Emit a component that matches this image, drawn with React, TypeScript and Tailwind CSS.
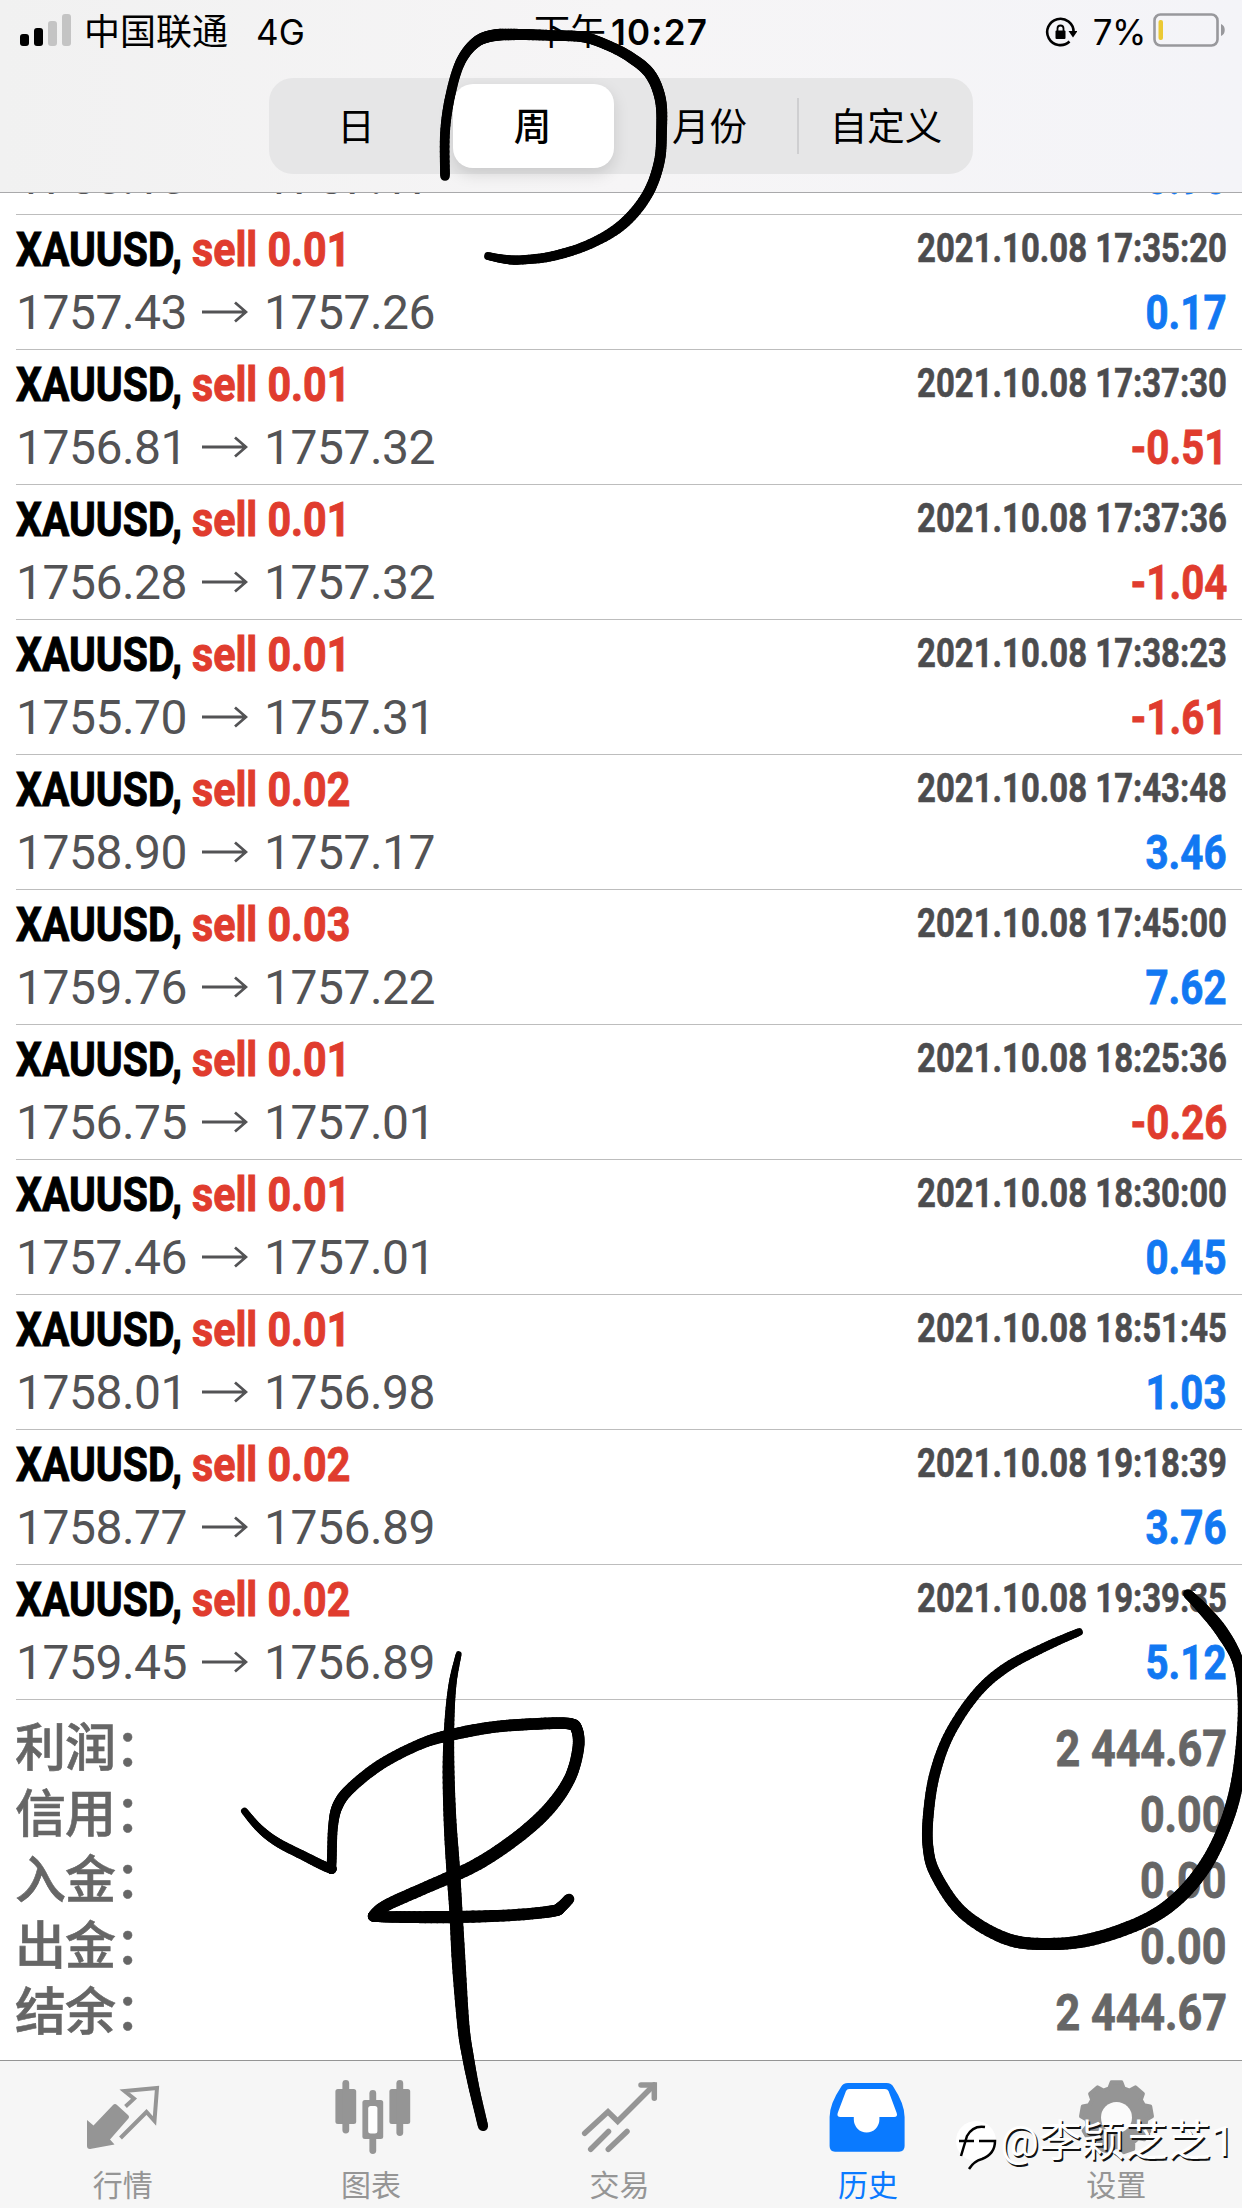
import type { ReactNode } from 'react';

type Deal = {
  volume: string;
  open: string;
  close: string;
  time: string;
  profit: string;
};

const deals: Deal[] = [
  { volume: '0.01', open: '1757.43', close: '1757.26', time: '2021.10.08 17:35:20', profit: '0.17' },
  { volume: '0.01', open: '1756.81', close: '1757.32', time: '2021.10.08 17:37:30', profit: '-0.51' },
  { volume: '0.01', open: '1756.28', close: '1757.32', time: '2021.10.08 17:37:36', profit: '-1.04' },
  { volume: '0.01', open: '1755.70', close: '1757.31', time: '2021.10.08 17:38:23', profit: '-1.61' },
  { volume: '0.02', open: '1758.90', close: '1757.17', time: '2021.10.08 17:43:48', profit: '3.46' },
  { volume: '0.03', open: '1759.76', close: '1757.22', time: '2021.10.08 17:45:00', profit: '7.62' },
  { volume: '0.01', open: '1756.75', close: '1757.01', time: '2021.10.08 18:25:36', profit: '-0.26' },
  { volume: '0.01', open: '1757.46', close: '1757.01', time: '2021.10.08 18:30:00', profit: '0.45' },
  { volume: '0.01', open: '1758.01', close: '1756.98', time: '2021.10.08 18:51:45', profit: '1.03' },
  { volume: '0.02', open: '1758.77', close: '1756.89', time: '2021.10.08 19:18:39', profit: '3.76' },
  { volume: '0.02', open: '1759.45', close: '1756.89', time: '2021.10.08 19:39:35', profit: '5.12' },
];

const totals = [
  { label: '利润：', value: '2 444.67' },
  { label: '信用：', value: '0.00' },
  { label: '入金：', value: '0.00' },
  { label: '出金：', value: '0.00' },
  { label: '结余：', value: '2 444.67' },
];

function StatusBar() {
  return (
    <div className="flex h-[64px] items-center text-[36px] leading-[64px] text-black">
      <div className="flex w-[534px] items-center pl-5">
        <svg width="52" height="34" viewBox="0 0 52 34" className="mt-[-3px]">
          <rect x="0" y="20" width="9" height="12" rx="3" />
          <rect x="14" y="14" width="9" height="18" rx="3" />
          <rect x="28" y="7" width="9" height="25" rx="3" fill="#c4c4c4" />
          <rect x="42" y="0" width="9" height="32" rx="3" fill="#c4c4c4" />
        </svg>
        <span className="ml-[12px]">中国联通</span>
        <span className="ml-[28px] text-[35px]">4G</span>
      </div>
      <div className="flex items-center">
        <span>下午</span>
        <span className="ml-[5px] text-[35px] font-semibold tracking-[1.2px]">10:27</span>
      </div>
      <div className="ml-auto flex items-center pr-[15px]">
        <svg width="32" height="32" viewBox="0 0 32 32" fill="none" className="mr-[16px]">
          <path d="M24.5 25.5A13.2 13.2 0 1 1 28.6 16" stroke="#000" strokeWidth="2.6" />
          <path d="M23.5 15h9l-4.5 6.5z" fill="#000" />
          <rect x="10.5" y="14.5" width="10" height="8.5" rx="1" fill="#000" />
          <path d="M12.5 15v-2.5a3 3 0 0 1 6 0V15" stroke="#000" strokeWidth="1.8" />
        </svg>
        <span className="text-[35px] tracking-[-0.5px]">7%</span>
        <svg width="74" height="34" viewBox="0 0 74 34" className="ml-[7px] mt-[-4px]">
          <rect x="1.5" y="1.5" width="63" height="31" rx="6" fill="none" stroke="#98989c" strokeWidth="2.6" />
          <rect x="5.5" y="7" width="4.5" height="20" rx="2" fill="#ebc934" />
          <path d="M68 11c5 1.5 5 10.5 0 12z" fill="#98989c" />
        </svg>
      </div>
    </div>
  );
}

function PeriodPicker() {
  return (
    <div className="mx-auto mt-[14px] flex h-[96px] w-[704px] items-center rounded-[24px] bg-[#e6e6e7] text-[37.5px] text-black">
      <div className="w-[176px] pr-[2px] pt-[2px] text-center">日</div>
      <div className="mx-[8px] flex h-[84px] w-[161px] items-center justify-center rounded-[20px] bg-white pr-[2px] pt-[2px] font-medium shadow-[0_6px_16px_rgba(0,0,0,0.13)]">
        周
      </div>
      <div className="flex h-[56px] w-[177px] items-center justify-center border-r-2 border-[#cfcfd1] pt-[2px]">
        月份
      </div>
      <div className="flex-1 pt-[2px] text-center">自定义</div>
    </div>
  );
}

function PriceLine({ open, close, profit }: Pick<Deal, 'open' | 'close' | 'profit'>) {
  const loss = profit.startsWith('-');
  return (
    <div className="flex h-[59px] whitespace-nowrap text-[48px] leading-[59px]">
      <div className="flex text-[#535355]">
        <span className="w-[186px] tracking-[-0.5px]">{open}</span>
        <svg
          width="46"
          height="24"
          viewBox="0 0 46 24"
          className="mt-[17px]"
          fill="none"
          stroke="#535355"
          strokeWidth="2.8"
        >
          <path d="M0 12H44M33 2.5L44 12L33 21.5" />
        </svg>
        <span className="ml-[16px] tracking-[-0.5px]">{close}</span>
      </div>
      <span
        className={`ml-auto inline-block origin-right scale-x-[0.84] font-bold [-webkit-text-stroke:0.8px] ${loss ? 'text-[#e03c2e]' : 'text-[#1278f2]'}`}
      >
        {profit}
      </span>
    </div>
  );
}

function DealRow({ deal }: { deal: Deal }) {
  return (
    <div className="ml-4 h-[135px] border-b border-[#bdbdbd] pr-[15px]">
      <div className="flex h-[68px] whitespace-nowrap text-[48px] font-bold leading-[70px]">
        <div className="w-[176px]">
          <span className="inline-block origin-left scale-x-[0.85] text-black [-webkit-text-stroke:1px]">
            XAUUSD,
          </span>
        </div>
        <span className="inline-block origin-left scale-x-[0.858] text-[#e03c2e] [-webkit-text-stroke:1px]">
          sell {deal.volume}
        </span>
        <span className="ml-auto inline-block origin-right scale-x-[0.822] text-[40px] leading-[68px] text-[#4c4c4e] [-webkit-text-stroke:0.6px]">
          {deal.time}
        </span>
      </div>
      <PriceLine open={deal.open} close={deal.close} profit={deal.profit} />
    </div>
  );
}

function Totals() {
  return (
    <div className="pl-[15px] pr-[15px] pt-[16px]">
      {totals.map((t) => (
        <div key={t.label} className="flex h-[66px] justify-between whitespace-nowrap leading-[66px] text-[#666]">
          <span className="text-[51px] font-medium tracking-[-1px] [-webkit-text-stroke:0.6px]">{t.label}</span>
          <span className="inline-block origin-right scale-x-[0.862] text-[50px] font-bold [-webkit-text-stroke:0.8px]">
            {t.value}
          </span>
        </div>
      ))}
    </div>
  );
}

function QuotesIcon() {
  return (
    <>
      <path d="M3 45l6.5 5.5L29 30q2-2 4 0l11 10q2 2 0 4L26 64.5l4.5 5L6 74q-3 0-3-3z" fill="currentColor" />
      <path
        d="M41.5 31.5L50 23.7L40.5 16L73 13L70.5 46L62.5 37L36.5 63"
        fill="none"
        stroke="currentColor"
        strokeWidth="4"
      />
    </>
  );
}

function ChartsIcon() {
  return (
    <g fill="currentColor">
      <rect x="2.4" y="14" width="20.8" height="35" rx="2.5" />
      <rect x="9.4" y="5" width="6.8" height="53.5" rx="3.4" />
      <rect x="56.4" y="14" width="20.8" height="35" rx="2.5" />
      <rect x="63.4" y="5" width="6.8" height="56" rx="3.4" />
      <rect x="29.4" y="25" width="20.8" height="39" rx="2.5" />
      <rect x="36.4" y="15" width="6.8" height="64" rx="3.4" />
      <rect x="35.2" y="31" width="9.2" height="27.5" rx="2.5" fill="#fff" />
    </g>
  );
}

function TradeIcon() {
  return (
    <g fill="none" stroke="currentColor" strokeWidth="5.5" strokeLinecap="round">
      <path d="M3.7 58.3L27 36.7L36.7 46.3L73 10" />
      <path d="M60 10H73.3V23.3" />
      <path d="M9.7 74.3L27.5 56.5M27.3 74.3L46 56.5" />
    </g>
  );
}

function HistoryIcon() {
  return (
    <>
      <path
        d="M12 12Q14 8 19 8H57.5Q62.5 8 64.5 12Q75.6 29 75.6 42V71Q75.6 76.7 70 76.7H6Q.6 76.7 .6 71V42Q.6 29 12 12Z"
        fill="currentColor"
      />
      <path
        d="M17 16Q18 14 20 14H56Q58.5 14 59.5 16L67.7 38Q69 42 65 42H50.4V44.6A12.8 12.8 0 0 1 24.8 44.6V42H11.5Q7.5 42 8.7 38Z"
        fill="#fff"
      />
    </>
  );
}

const gearPoints = Array.from({ length: 9 })
  .flatMap((_, i) =>
    [
      [-14, 30],
      [-8, 35.5],
      [8, 35.5],
      [14, 30],
    ].map(([offset, r]) => {
      const a = ((i * 40 + offset - 90) * Math.PI) / 180;
      return `${38.5 + r * Math.cos(a)},${42.5 + r * Math.sin(a)}`;
    }),
  )
  .join(' ');

function SettingsIcon() {
  return (
    <>
      <polygon points={gearPoints} fill="currentColor" stroke="currentColor" strokeWidth="4" strokeLinejoin="round" />
      <circle cx="38.5" cy="42.5" r="15.5" fill="#fbfbfb" />
    </>
  );
}

function Tab({ label, active, children }: { label: string; active?: boolean; children: ReactNode }) {
  return (
    <div className={`flex flex-1 flex-col items-center pt-[14px] ${active ? 'text-[#0a7aff]' : 'text-[#959595]'}`}>
      <svg width="80" height="80" viewBox="0 0 80 80">
        {children}
      </svg>
      <span className="mt-[9px] pr-[3px] text-[30px] leading-[44px]">{label}</span>
    </div>
  );
}

function TabBar() {
  return (
    <div className="flex h-[148px] border-t border-[#959595] bg-[#f6f6f6]">
      <Tab label="行情"><QuotesIcon /></Tab>
      <Tab label="图表"><ChartsIcon /></Tab>
      <Tab label="交易"><TradeIcon /></Tab>
      <Tab label="历史" active><HistoryIcon /></Tab>
      <Tab label="设置"><SettingsIcon /></Tab>
    </div>
  );
}

// Pen points: x, y, pen width
type PenPoint = [number, number, number];

const strokes: PenPoint[][] = [
  [
    [445, 176, 9], [445, 133, 9], [450, 97, 9], [460, 63, 9], [475, 43, 10], [493, 35.5, 11], [520, 34.5, 10.5],
    [553, 35.5, 10], [583, 37, 10], [607, 45, 9.5], [630, 57, 10], [650, 74, 10.5], [660.5, 100, 10.5],
    [661.5, 133, 10], [659, 163, 10], [647, 195, 10], [623, 224, 10], [590, 244, 9], [553, 256, 9],
    [520, 260, 8.5], [503, 259, 8], [488, 256, 7],
  ],
  [
    [458.7, 1654, 5], [452.7, 1683, 7], [449.5, 1720, 9], [448.5, 1767, 11], [450, 1820, 12], [453, 1867, 13],
    [456, 1913, 12.5], [459, 1967, 13], [463.5, 2027, 11.5], [468, 2057, 11], [474.5, 2090, 10], [483, 2126, 9.5],
  ],
  [
    [244.4, 1811, 6], [259, 1828, 7], [277, 1842, 8], [304, 1856, 8.5], [329, 1868, 9], [331.5, 1864, 9],
    [333, 1827, 9], [338, 1805, 10], [352, 1787, 10], [383, 1763, 10], [423, 1743, 10], [455, 1734, 11],
    [494, 1727, 11], [534, 1724, 11], [568, 1723.5, 11], [577, 1730, 11], [578, 1750, 11], [569, 1780, 11],
    [547, 1811, 12], [514, 1840, 12], [474, 1866, 12], [427, 1887, 11.5], [387, 1905, 11], [374, 1915, 10],
    [377, 1916.5, 10], [400, 1917, 11], [455, 1917, 11.5], [514, 1915, 11], [553, 1911, 11], [561, 1907, 10.5],
    [569, 1899, 10],
  ],
  [
    [1079, 1632, 7], [1047, 1646, 8], [1007, 1667, 9], [977, 1693, 9], [950, 1733, 9.5], [935, 1773, 10],
    [928.5, 1813, 10], [928, 1847, 10], [936, 1875, 10.5], [963, 1913, 11], [1007, 1939, 11.5], [1050, 1944, 11.5],
    [1093, 1939, 12], [1143, 1921.5, 12.5], [1176, 1900, 13], [1203, 1869, 13], [1222, 1833, 12], [1235, 1793, 12],
    [1241.5, 1747, 11], [1243, 1700, 10], [1238, 1662, 10.5], [1222, 1632, 12], [1203, 1609, 11], [1188, 1594, 9],
  ],
];

// Catmull-Rom between the recorded points, width is interpolated as well
function smooth(points: PenPoint[]): PenPoint[] {
  const steps = 10;
  const out: PenPoint[] = [];
  for (let i = 0; i < points.length - 1; i++) {
    const p0 = points[Math.max(i - 1, 0)];
    const p1 = points[i];
    const p2 = points[i + 1];
    const p3 = points[Math.min(i + 2, points.length - 1)];
    const at = (k: number, t: number) =>
      0.5 *
      (2 * p1[k] +
        (p2[k] - p0[k]) * t +
        (2 * p0[k] - 5 * p1[k] + 4 * p2[k] - p3[k]) * t * t +
        (3 * p1[k] - p0[k] - 3 * p2[k] + p3[k]) * t * t * t);
    for (let s = 0; s < steps; s++) {
      out.push([at(0, s / steps), at(1, s / steps), at(2, s / steps)]);
    }
  }
  out.push(points[points.length - 1]);
  return out;
}

function Ink() {
  return (
    <svg className="pointer-events-none absolute left-0 top-0" width="1242" height="2208" viewBox="0 0 1242 2208">
      {strokes.map((stroke, i) => (
        <g key={i} stroke="#000" strokeLinecap="round">
          {smooth(stroke).map((p, j, all) =>
            j === 0 ? null : (
              <line key={j} x1={all[j - 1][0]} y1={all[j - 1][1]} x2={p[0]} y2={p[1]} strokeWidth={p[2] + 0.7} />
            ),
          )}
        </g>
      ))}
    </svg>
  );
}

function Watermark() {
  return (
    <div className="absolute right-[7px] top-[2110px] flex items-center whitespace-nowrap text-[43px] leading-[56px] text-white">
      <svg width="46" height="56" viewBox="0 0 46 56" fill="none" className="mt-[6px]">
        <circle cx="22" cy="25" r="20" fill="#fff" />
        <path d="M7 40L13 20Q19 9 31 11" stroke="#000" strokeWidth="2.5" />
        <path d="M5 25H20M25 25H41Q41 38 28 43Q20 45 15 53" stroke="#000" strokeWidth="2.5" />
      </svg>
      <span className="[text-shadow:1.5px_1.5px_0_#111]">@李颖芝芝1</span>
    </div>
  );
}

export default function App() {
  return (
    <div className="relative flex h-[2208px] w-[1242px] flex-col overflow-hidden bg-white font-['Roboto','Noto_Sans_CJK_SC',sans-serif]">
      <header className="h-[193px] shrink-0 border-b border-[#a9a9ab] bg-linear-to-r from-[#f1f1f1] via-[#f6f5f6] to-[#f4f4f8] font-['Inter','Noto_Sans_CJK_SC',sans-serif]">
        <StatusBar />
        <PeriodPicker />
      </header>
      <main className="flex-1">
        {/* tail of the deal scrolled under the header */}
        <div className="ml-4 flex h-[22px] flex-col justify-end overflow-hidden border-b border-[#bdbdbd] pb-[7px] pr-[15px]">
          <PriceLine open="1758.13" close="1757.17" profit="0.96" />
        </div>
        {deals.map((deal) => (
          <DealRow key={deal.time} deal={deal} />
        ))}
        <Totals />
      </main>
      <TabBar />
      <Watermark />
      <Ink />
    </div>
  );
}
